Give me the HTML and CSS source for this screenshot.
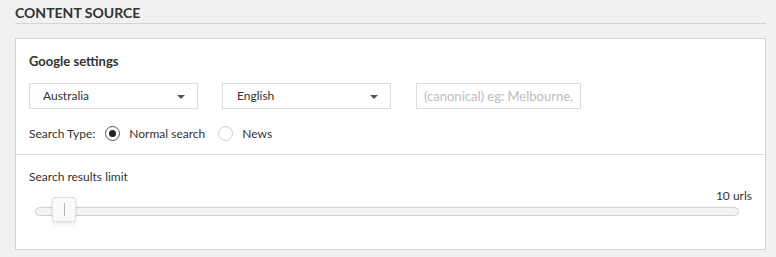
FILE: index.html
```html
<!DOCTYPE html>
<html lang="en">
<head>
  <meta charset="UTF-8" />
  <meta name="viewport" content="width=device-width, initial-scale=1.0"/>
  <title>Content Source</title>
  <link rel="stylesheet" href="styles.css">
</head>
<body>
  <section class="source">
    <h2 class="section-title">CONTENT SOURCE</h2>

    <div class="panel">
      <div class="panel-top">
        <h3>Google settings</h3>

        <div class="controls">
          <div class="select">
            <span>Australia</span>
            <i class="caret"></i>
          </div>
          <div class="select">
            <span>English</span>
            <i class="caret"></i>
          </div>
          <input class="location" type="text" placeholder="(canonical) eg: Melbourne, Victoria">
        </div>

        <div class="search-type">
          <span class="label">Search Type:</span>
          <label class="radio checked"><span class="dot"></span>Normal search</label>
          <label class="radio"><span class="dot"></span>News</label>
        </div>
      </div>

      <div class="panel-bottom">
        <div class="limit-label">Search results limit</div>
        <div class="limit-value">10 urls</div>
        <div class="slider">
          <div class="handle"></div>
        </div>
      </div>
    </div>
  </section>
</body>
</html>
```

FILE: styles.css
```css
body {
  font-family: Lato, "Open Sans", Arial, sans-serif;
  margin: 0;
  background: #f1f1f1;
  color: #333;
  font-size: 12px;
}

.source {
  margin: 0 10px 0 15px;
}

.section-title {
  margin: 0;
  padding-top: 4px;
  height: 19px;
  font-size: 14px;
  font-weight: 700;
  line-height: 17px;
  color: #333;
  border-bottom: 1px solid #d3d3d3;
  margin-bottom: 14px;
}

.panel {
  background: #fff;
  border: 1px solid #d3d3d3;
}

.panel-top {
  padding: 14px 13px 9px;
  border-bottom: 1px solid #dcdcdc;
}

.panel-top h3 {
  margin: 0 0 14px;
  font-size: 13px;
  font-weight: 700;
  line-height: 16px;
}

.controls {
  display: flex;
  gap: 24px;
  margin-bottom: 12px;
}

.select {
  box-sizing: border-box;
  width: 169px;
  height: 26px;
  border: 1px solid #dcdcdc;
  padding: 0 12px 0 13px;
  display: flex;
  align-items: center;
  justify-content: space-between;
  line-height: 24px;
}

.select + .select {
  padding-left: 14px;
}

.caret {
  width: 0;
  height: 0;
  border-left: 4px solid transparent;
  border-right: 4px solid transparent;
  border-top: 4px solid #555;
  margin-top: 1px;
}

.location {
  box-sizing: border-box;
  width: 165px;
  height: 26px;
  margin-left: 1px;
  border: 1px solid #dcdcdc;
  padding: 0 7px;
  font-family: inherit;
  font-size: 13px;
  color: #333;
  outline: none;
}

.location::placeholder {
  color: #bdbdbd;
}

.search-type {
  display: flex;
  align-items: center;
  height: 24px;
}

.search-type .label {
  margin-right: 10px;
}

.radio {
  display: flex;
  align-items: center;
  margin-right: 13px;
}

.radio .dot {
  box-sizing: border-box;
  width: 15px;
  height: 15px;
  border: 1px solid #ccc;
  border-radius: 50%;
  margin-right: 9px;
  position: relative;
}

.radio.checked .dot {
  border-color: #555;
}

.radio.checked .dot::after {
  content: "";
  position: absolute;
  left: 3px;
  top: 3px;
  width: 7px;
  height: 7px;
  border-radius: 50%;
  background: #222;
}

.panel-bottom {
  padding: 14px 13px 33px;
}

.limit-label {
  line-height: 16px;
}

.limit-value {
  text-align: right;
  line-height: 16px;
  margin-top: 3px;
  margin-bottom: 3px;
}

.slider {
  position: relative;
  box-sizing: border-box;
  height: 9px;
  margin: 0 13px 0 6px;
  border: 1px solid #d0d0d0;
  border-radius: 5px;
  background: #f4f4f4;
}

.handle {
  position: absolute;
  left: 16px;
  top: -11px;
  box-sizing: border-box;
  width: 24px;
  height: 25px;
  background: #fafafa;
  border: 1px solid #e0e0e0;
  border-radius: 3px;
  box-shadow: 0 2px 4px rgba(0,0,0,0.1);
}

.handle::after {
  content: "";
  position: absolute;
  left: 11px;
  top: 5px;
  width: 1px;
  height: 13px;
  background: #b5b5b5;
}
```
